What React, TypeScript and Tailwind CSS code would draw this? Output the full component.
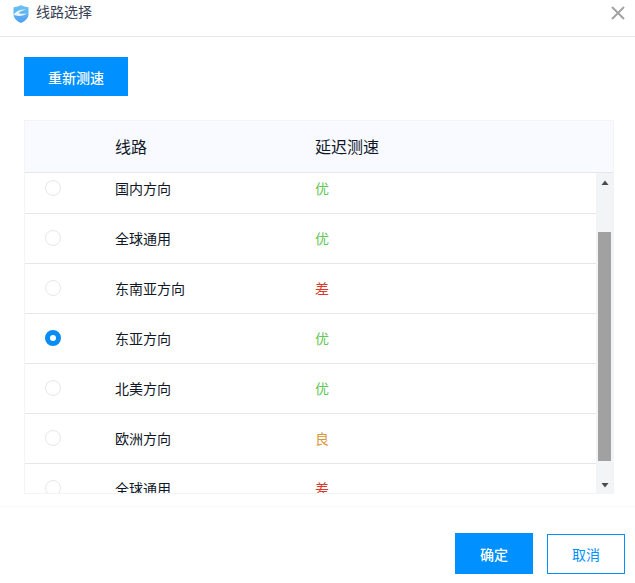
const font = { fontFamily: '"Noto Sans CJK SC", "Noto Sans", sans-serif' };

const routes = [
  { name: '国内方向', level: '优' },
  { name: '全球通用', level: '优' },
  { name: '东南亚方向', level: '差' },
  { name: '东亚方向', level: '优', checked: true },
  { name: '北美方向', level: '优' },
  { name: '欧洲方向', level: '良' },
  { name: '全球通用', level: '差' },
];

const levelColors: Record<string, string> = {
  优: 'text-[#62c755]',
  良: 'text-[#d9963a]',
  差: 'text-[#d93a2b]',
};

function ShieldIcon() {
  return (
    <svg width="18" height="20" viewBox="0 0 18 20" fill="none">
      <defs>
        <linearGradient id="shield" x1="0" y1="0" x2="0" y2="1">
          <stop offset="0" stopColor="#6cc6ee" />
          <stop offset="1" stopColor="#4f9df7" />
        </linearGradient>
      </defs>
      <path d="M9 1C6.500 2.500 4 3 1.500 3.200V10c0 4.200 3.500 7.500 7.500 9 4-1.500 7.500-4.800 7.500-9V3.200C14 3 11.500 2.500 9 1z" fill="url(#shield)" />
      <path d="M1.500 10.500c2.500-3.500 8-5.500 13-5-3 .5-6 1.500-8 3.500 2 1 5 1 8.500.5-3 2.500-10 3.500-13.500 1z" fill="#e8f5fd" />
    </svg>
  );
}

function Radio({ checked }: { checked?: boolean }) {
  if (checked) {
    return <div className="h-4 w-4 rounded-full border-[5px] border-[#0a8cf5] bg-white" />;
  }
  return <div className="h-4 w-4 rounded-full border border-gray-200 bg-white" />;
}

export default function App() {
  return (
    <div className="h-screen overflow-hidden bg-white" style={font}>
      <div className="box-content flex h-9 items-start justify-between border-b border-gray-200 pl-3 pr-2.5">
        <div className="flex items-center gap-1.5 pt-1">
          <ShieldIcon />
          <span className="-mt-1.5 text-sm text-gray-700">线路选择</span>
        </div>
        <svg className="mt-1.5" width="14" height="14" viewBox="0 0 14 14" fill="none" stroke="#a3a3a3" strokeWidth="2">
          <path d="M1 1l12 12M13 1L1 13" />
        </svg>
      </div>

      <div className="pl-6 pt-5">
        <button className="h-9.75 w-26 bg-[#0090ff] text-sm font-medium text-white">重新测速</button>

        <div className="mt-6 flex h-[374px] w-147.5 flex-col border border-gray-100">
          <div className="grid h-13 shrink-0 grid-cols-[90px_200px_1fr] items-center border-b border-gray-200 bg-[#f9faff] text-base text-gray-900">
            <div />
            <div className="-mt-0.5">线路</div>
            <div className="-mt-0.5">延迟测速</div>
          </div>
          <div className="flex min-h-0 flex-1">
            <div className="min-w-0 flex-1 overflow-hidden">
              <div className="-mt-2.25">
                {routes.map((route, i) => (
                  <div key={i} className="grid h-12.5 grid-cols-[90px_200px_1fr] items-center border-b border-gray-200 pb-0.5 text-sm text-gray-900">
                    <div className="pl-5">
                      <Radio checked={route.checked} />
                    </div>
                    <div>{route.name}</div>
                    <div className={levelColors[route.level]}>{route.level}</div>
                  </div>
                ))}
              </div>
            </div>
            <div className="flex w-4.25 shrink-0 flex-col items-center bg-gray-100">
              <svg className="mt-1.5 shrink-0" width="8" height="8" viewBox="0 0 8 8" fill="#4b4b4b">
                <path d="M4 1.500L7.500 6H.5z" />
              </svg>
              <div className="mt-11.25 h-57.25 w-3.25 shrink-0 bg-neutral-400" />
              <svg className="mt-5 shrink-0" width="8" height="8" viewBox="0 0 8 8" fill="#4b4b4b">
                <path d="M4 6.500L.5 2h7z" />
              </svg>
            </div>
          </div>
        </div>
      </div>

      <div className="mt-3 flex justify-end gap-3.5 border-t border-gray-50 pr-2.5 pt-6.5">
        <button className="h-10.25 w-19.5 bg-[#0090ff] text-sm font-medium text-white">确定</button>
        <button className="mt-px h-10 w-19.5 border border-[#0090ff] bg-white text-sm text-[#0090ff]">取消</button>
      </div>
    </div>
  );
}
